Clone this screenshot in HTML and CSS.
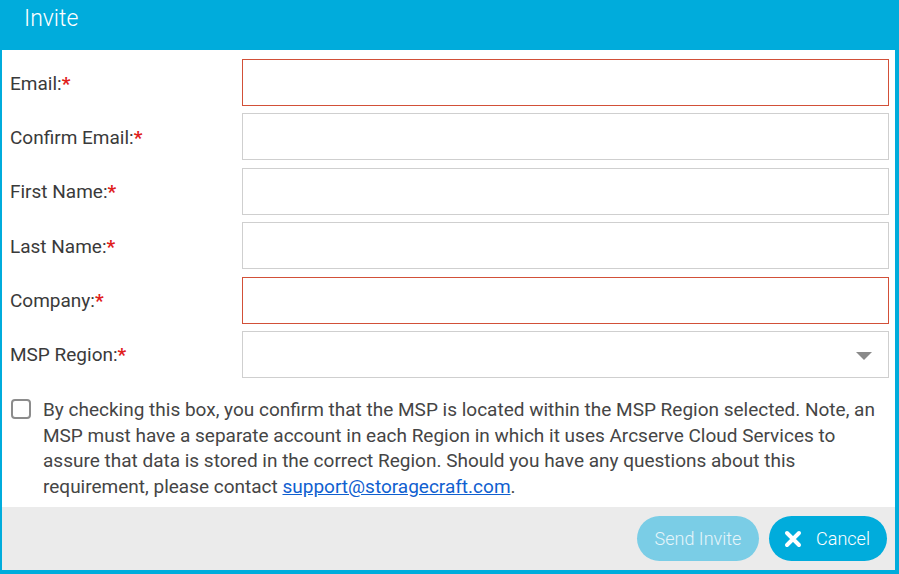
FILE: index.html
```html
<!DOCTYPE html>
<html>
<head>
<meta charset="utf-8">
<link rel="stylesheet" href="styles.css">
</head>
<body>
<div class="dialog">
  <div class="header">Invite</div>
  <div class="content">
    <div class="row"><label class="label">Email:<span class="req">*</span></label><div class="input error"></div></div>
    <div class="row"><label class="label">Confirm Email:<span class="req">*</span></label><div class="input"></div></div>
    <div class="row"><label class="label">First Name:<span class="req">*</span></label><div class="input"></div></div>
    <div class="row"><label class="label">Last Name:<span class="req">*</span></label><div class="input"></div></div>
    <div class="row"><label class="label">Company:<span class="req">*</span></label><div class="input error"></div></div>
    <div class="row"><label class="label">MSP Region:<span class="req">*</span></label><div class="input select"><span class="caret"></span></div></div>
    <div class="confirm">
      <span class="checkbox"></span>
      <p class="confirm-text">By checking this box, you confirm that the MSP is located within the MSP Region selected. Note, an MSP must have a separate account in each Region in which it uses Arcserve Cloud Services to assure that data is stored in the correct Region. Should you have any questions about this requirement, please contact <a class="link" href="#">support@storagecraft.com</a>.</p>
    </div>
  </div>
  <div class="footer">
    <button class="btn btn-disabled">Send Invite</button>
    <button class="btn btn-primary"><svg class="x-icon" width="18" height="18" viewBox="0 0 18 18"><path d="M3 3 L15 15 M15 3 L3 15" stroke="#fff" stroke-width="4" stroke-linecap="round"/></svg>Cancel</button>
  </div>
</div>
</body>
</html>
```

FILE: styles.css
```css
html, body {
  margin: 0;
  padding: 0;
}
body {
  background: #00acdc;
  font-family: Roboto, "Liberation Sans", sans-serif;
}
.dialog {
  width: 899px;
  height: 574px;
  box-sizing: border-box;
  padding: 0 4px 4px 2px;
  display: flex;
  flex-direction: column;
}
.header {
  height: 50px;
  flex: none;
  box-sizing: border-box;
  padding: 5px 0 0 22px;
  color: #fff;
  font-size: 23px;
  font-weight: 300;
  line-height: 28px;
}
.content {
  background: #fff;
  padding: 9px 6px 0 8px;
  height: 457px;
  flex: none;
  box-sizing: border-box;
}
.row {
  display: flex;
  align-items: center;
  height: 47px;
  margin-bottom: 7.4px;
}
.label {
  width: 232px;
  flex: none;
  font-size: 19px;
  color: #3a3a3a;
  padding-top: 1px;
}
.req {
  color: #e0201b;
  font-weight: 700;
}
.input {
  flex: 1;
  height: 47px;
  box-sizing: border-box;
  border: 1px solid #cfcfcf;
  background: #fff;
}
.input.error {
  border-color: #d25038;
}
.select {
  position: relative;
}
.caret {
  position: absolute;
  right: 16px;
  top: 20px;
  width: 0;
  height: 0;
  border-left: 8px solid transparent;
  border-right: 8px solid transparent;
  border-top: 8px solid #8a8a8a;
}
.confirm {
  display: flex;
  align-items: flex-start;
  margin-top: 19px;
}
.checkbox {
  flex: none;
  width: 20px;
  height: 20px;
  box-sizing: border-box;
  border: 2px solid #8c8c8c;
  border-radius: 4px;
  margin: 2px 12px 0 1px;
}
.confirm-text {
  margin: 0;
  font-size: 19px;
  line-height: 25.7px;
  color: #454545;
}
.link {
  color: #1060d0;
  text-decoration: underline;
}
.footer {
  flex: 1;
  background: #ebebeb;
  display: flex;
  justify-content: flex-end;
  align-items: flex-start;
  padding: 9px 8px 0 0;
  gap: 10px;
}
.btn {
  height: 45px;
  border: none;
  border-radius: 23px;
  font-family: Roboto, "Liberation Sans", sans-serif;
  font-size: 18px;
  font-weight: 300;
  color: #fff;
  display: flex;
  align-items: center;
  justify-content: center;
}
.btn-disabled {
  width: 122px;
  background: #7acde6;
  color: #e6f5fa;
}
.btn-primary {
  width: 118px;
  background: #00acdc;
  gap: 14px;
  padding-right: 8px;
}
.x-icon {
  flex: none;
}
```
